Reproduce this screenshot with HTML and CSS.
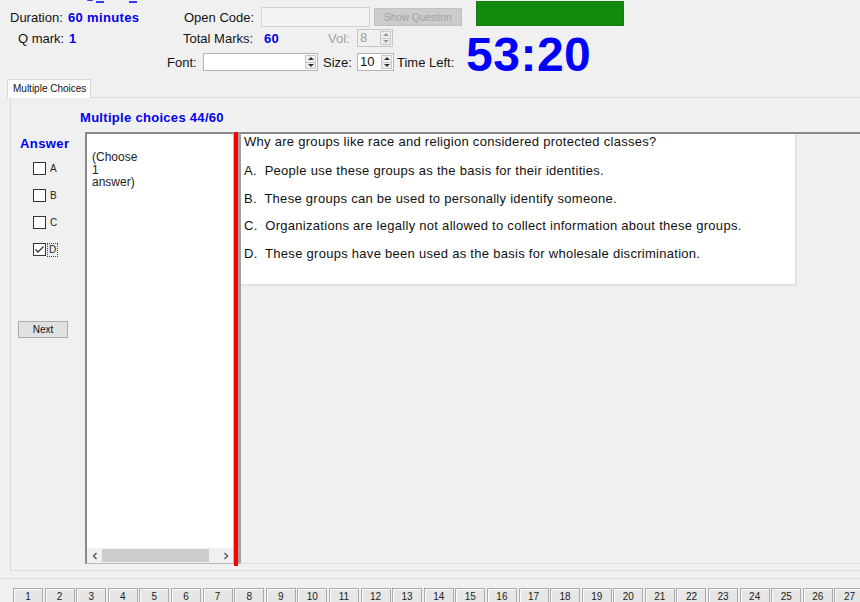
FILE: index.html
```html
<!DOCTYPE html>
<html>
<head>
<meta charset="utf-8">
<title>Exam</title>
<link rel="stylesheet" href="styles.css">
</head>
<body>
<div class="app">
  <header class="top">
    <div class="fields">
      <div class="clip"><span class="c1"></span><span class="c2"></span><span class="c3"></span></div>
      <div class="row r1">
        <span class="lbl w58">Duration:</span>
        <span class="val w116">60 minutes</span>
        <span class="lbl w77">Open Code:</span>
        <span class="input dis w109"></span>
        <span class="btn dis-btn">Show Question</span>
      </div>
      <div class="row r2">
        <span class="lbl w51">Q mark:</span>
        <span class="val w114">1</span>
        <span class="lbl w81">Total Marks:</span>
        <span class="val w64">60</span>
        <span class="lbl gray w29">Vol:</span>
        <span class="spin dis w36"><span class="v">8</span><span class="arrows"><span class="up"></span><span class="down"></span></span></span>
      </div>
      <div class="row r3">
        <span class="lbl w36">Font:</span>
        <span class="spin w115"><span class="v"></span><span class="arrows"><span class="up"></span><span class="down"></span></span></span>
        <span class="lbl w34 ml5">Size:</span>
        <span class="spin w37"><span class="v">10</span><span class="arrows"><span class="up"></span><span class="down"></span></span></span>
        <span class="lbl ml3">Time Left:</span>
      </div>
    </div>
    <div class="timercol">
      <div class="greenbar"></div>
      <div class="timer">53:20</div>
    </div>
  </header>

  <div class="tabs"><div class="tab">Multiple Choices</div></div>

  <div class="panel">
    <div class="title">Multiple choices 44/60</div>
    <div class="body">
      <div class="answers">
        <div class="anshead">Answer</div>
        <div class="opts">
          <div class="opt"><span class="cb"></span><span class="ol">A</span></div>
          <div class="opt"><span class="cb"></span><span class="ol">B</span></div>
          <div class="opt"><span class="cb"></span><span class="ol">C</span></div>
          <div class="opt"><span class="cb"><svg width="11" height="11" viewBox="0 0 11 11"><path d="M1.5 5.5 L4 8 L9.5 2.5" fill="none" stroke="#333" stroke-width="1.4"/></svg></span><span class="ol focus">D</span></div>
        </div>
        <div class="nextbtn">Next</div>
      </div>

      <div class="textpanel">
        <div class="tp-text">(Choose<br>1<br>answer)</div>
        <div class="hscroll">
          <span class="sarrow"><svg width="8" height="8" viewBox="0 0 8 8"><path d="M5.5 1 L2.5 4 L5.5 7" fill="none" stroke="#555" stroke-width="1.4"/></svg></span>
          <span class="thumb"></span>
          <span class="track"></span>
          <span class="sarrow"><svg width="8" height="8" viewBox="0 0 8 8"><path d="M2.5 1 L5.5 4 L2.5 7" fill="none" stroke="#555" stroke-width="1.4"/></svg></span>
        </div>
      </div>

      <div class="splitter"></div>

      <div class="qarea">
        <div class="qbox">
          <p class="q">Why are groups like race and religion considered protected classes?</p>
          <p class="a first">A.&nbsp; People use these groups as the basis for their identities.</p>
          <p class="a">B.&nbsp; These groups can be used to personally identify someone.</p>
          <p class="a">C.&nbsp; Organizations are legally not allowed to collect information about these groups.</p>
          <p class="a">D.&nbsp; These groups have been used as the basis for wholesale discrimination.</p>
        </div>
      </div>
    </div>
  </div>

  <div class="sep"></div>

  <div class="nums">
    <span class="nb">1</span><span class="nb">2</span><span class="nb">3</span><span class="nb">4</span><span class="nb">5</span><span class="nb">6</span><span class="nb">7</span><span class="nb">8</span><span class="nb">9</span><span class="nb">10</span><span class="nb">11</span><span class="nb">12</span><span class="nb">13</span><span class="nb">14</span><span class="nb">15</span><span class="nb">16</span><span class="nb">17</span><span class="nb">18</span><span class="nb">19</span><span class="nb">20</span><span class="nb">21</span><span class="nb">22</span><span class="nb">23</span><span class="nb">24</span><span class="nb">25</span><span class="nb">26</span><span class="nb">27</span>
  </div>
</div>
</body>
</html>
```

FILE: styles.css
```css
* { box-sizing: border-box; }
html, body { margin: 0; padding: 0; }
body {
  background: #f0f0f0;
  font-family: "Liberation Sans", Arial, sans-serif;
  font-size: 13px;
  color: #111;
  overflow: hidden;
  width: 860px;
  height: 602px;
}
.app { width: 860px; height: 602px; overflow: hidden; }

/* header */
.top { display: flex; height: 77px; }
.fields { width: 465px; flex: none; }
.clip { height: 3px; display: flex; align-items: flex-start; }
.clip span { display: block; background: #3a3aff; height: 2px; }
.clip .c1 { margin-left: 87px; width: 6px; height: 1px; border-radius: 0 0 3px 3px; }
.clip .c2 { margin-left: 3px; width: 8px; margin-top: 1px; }
.clip .c3 { margin-left: 25px; width: 8px; margin-top: 1px; }

.row { display: flex; align-items: center; white-space: nowrap; }
.r1 { height: 20px; margin-top: 4px; padding-left: 10px; }
.r2 { height: 18px; margin-top: 2px; padding-left: 18px; }
.r3 { height: 18px; margin-top: 6px; padding-left: 167px; }

.lbl { display: inline-block; color: #141414; }
.lbl.gray { color: #a3a3a3; }
.val { display: inline-block; color: #0000f0; font-weight: bold; letter-spacing: 0.35px; }
.w29 { width: 29px; } .w34 { width: 34px; } .w36 { width: 36px; } .w37 { width: 37px; }
.w51 { width: 51px; } .w58 { width: 58px; } .w64 { width: 64px; } .w77 { width: 77px; }
.w81 { width: 81px; } .w109 { width: 109px; } .w114 { width: 114px; } .w115 { width: 115px; }
.w116 { width: 116px; }
.ml5 { margin-left: 5px; } .ml3 { margin-left: 3px; }

.input { display: inline-block; height: 20px; border: 1px solid #d2d2d2; background: #f3f3f3; }
.btn.dis-btn {
  display: inline-flex; align-items: center; justify-content: center;
  margin-left: 4px; width: 88px; height: 18px;
  background: #cccccc; border: 1px solid #c2c2c2;
  color: #a2a2a2; font-size: 10px;
}

.spin {
  display: inline-flex; height: 18px; border: 1px solid #b5b5b5; background: #fff;
}
.spin .v { flex: 1; line-height: 16px; padding-left: 2px; font-size: 13px; }
.spin .arrows {
  width: 13px; display: flex; flex-direction: column; padding: 1px;
}
.spin .arrows span {
  flex: 1; display: flex; align-items: center; justify-content: center;
  background: #efefef; border: 1px solid #c9c9c9;
}
.spin .arrows span + span { border-top: none; }
.spin .up::before {
  content: ""; border-left: 3px solid transparent; border-right: 3px solid transparent;
  border-bottom: 3px solid #333;
}
.spin .down::before {
  content: ""; border-left: 3px solid transparent; border-right: 3px solid transparent;
  border-top: 3px solid #333;
}
.spin.dis { background: #f0f0f0; border-color: #c6c6c6; }
.spin.dis .v { color: #9d9d9d; }
.spin.dis .up::before { border-bottom-color: #9a9a9a; }
.spin.dis .down::before { border-top-color: #9a9a9a; }

.timercol { flex: none; }
.greenbar {
  margin-top: 1px; margin-left: 11px;
  width: 148px; height: 25px;
  background: #128a0e; border: 1px solid #1b7a16;
}
.timer {
  margin-top: 9px; margin-left: 1px;
  font-size: 48px; line-height: 40px; font-weight: bold;
  color: #0000ff; letter-spacing: 0.5px;
}

/* tabs */
.tabs { height: 19px; margin-top: 1px; padding-left: 7px; display: flex; align-items: flex-end; }
.tab {
  width: 84px; height: 19px; background: #fff;
  border: 1px solid #d9d9d9; border-bottom: none;
  font-size: 10px; line-height: 17px; padding-left: 5px; color: #111;
  position: relative; z-index: 1; margin-bottom: -1px;
}

.panel {
  margin-left: 10px; width: 870px;
  border: 1px solid #d9d9d9;
  padding-bottom: 6px;
}
.title {
  padding: 12px 0 6px 69px;
  line-height: 16px; font-weight: bold; color: #0000f0; letter-spacing: 0.3px;
}
.body { display: flex; height: 432px; }

.answers { width: 74px; flex: none; }
.anshead {
  margin-top: 4px; padding-left: 9px;
  line-height: 16px; font-weight: bold; color: #0000f0; letter-spacing: 0.4px;
}
.opts { margin-top: 10px; padding-left: 22px; display: flex; flex-direction: column; gap: 14px; }
.opt { display: flex; align-items: center; height: 13px; }
.cb {
  width: 13px; height: 13px; border: 1px solid #333; background: #fff;
  display: flex; align-items: center; justify-content: center;
}
.ol { margin-left: 4px; font-size: 10px; line-height: 12px; color: #222; }
.ol.focus { margin-left: 2px; outline: 1px dotted #444; padding: 0 1px; }
.nextbtn {
  margin: 65px 0 0 7px; width: 50px; height: 17px;
  background: #e1e1e1; border: 1px solid #adadad;
  font-size: 10px; text-align: center; line-height: 15px; color: #111;
}

.textpanel {
  width: 149px; flex: none; display: flex; flex-direction: column;
  background: #fff;
  border-top: 2px solid #8a8a8a; border-left: 2px solid #8a8a8a;
  border-right: 1px solid #b9b9b9; border-bottom: 1px solid #b9b9b9;
}
.tp-text {
  flex: 1; padding: 17px 0 0 5px;
  font-size: 12px; line-height: 12.5px; color: #222;
}
.hscroll { height: 15px; display: flex; align-items: center; background: #f0f0f0; }
.sarrow { width: 15px; height: 15px; display: flex; align-items: center; justify-content: center; flex: none; }
.thumb { width: 107px; height: 13px; background: #cdcdcd; flex: none; }
.track { flex: 1; }

.splitter { width: 4px; flex: none; background: #ff0000; margin-bottom: -2px; }

.qarea {
  flex: 1;
  border-top: 2px solid #8a8a8a; border-left: 3px solid #a0a0a0;
  border-bottom: 1px solid #dddddd;
}
.qbox {
  width: 556px; height: 152px; background: #fff;
  border-right: 2px solid #e2e2e2; border-bottom: 2px solid #e2e2e2;
  padding-left: 3px;
}
.qbox p { margin: 0; line-height: 16px; white-space: nowrap; color: #111; letter-spacing: 0.28px; }
.qbox .a { margin-top: 11.5px; }
.qbox .a.first { margin-top: 13px; }

.sep { margin-top: 7px; height: 1px; background: #dcdcdc; }

.nums {
  margin-top: 9px; padding-left: 13px;
  display: flex; gap: 1.6px;
}
.nb {
  flex: none; width: 30px; height: 18px;
  background: #e6e6e6; border: 1px solid #ababab;
  box-shadow: inset 1px 1px 0 #fbfbfb;
  font-size: 10px; line-height: 16px; text-align: center; color: #222;
}
```
